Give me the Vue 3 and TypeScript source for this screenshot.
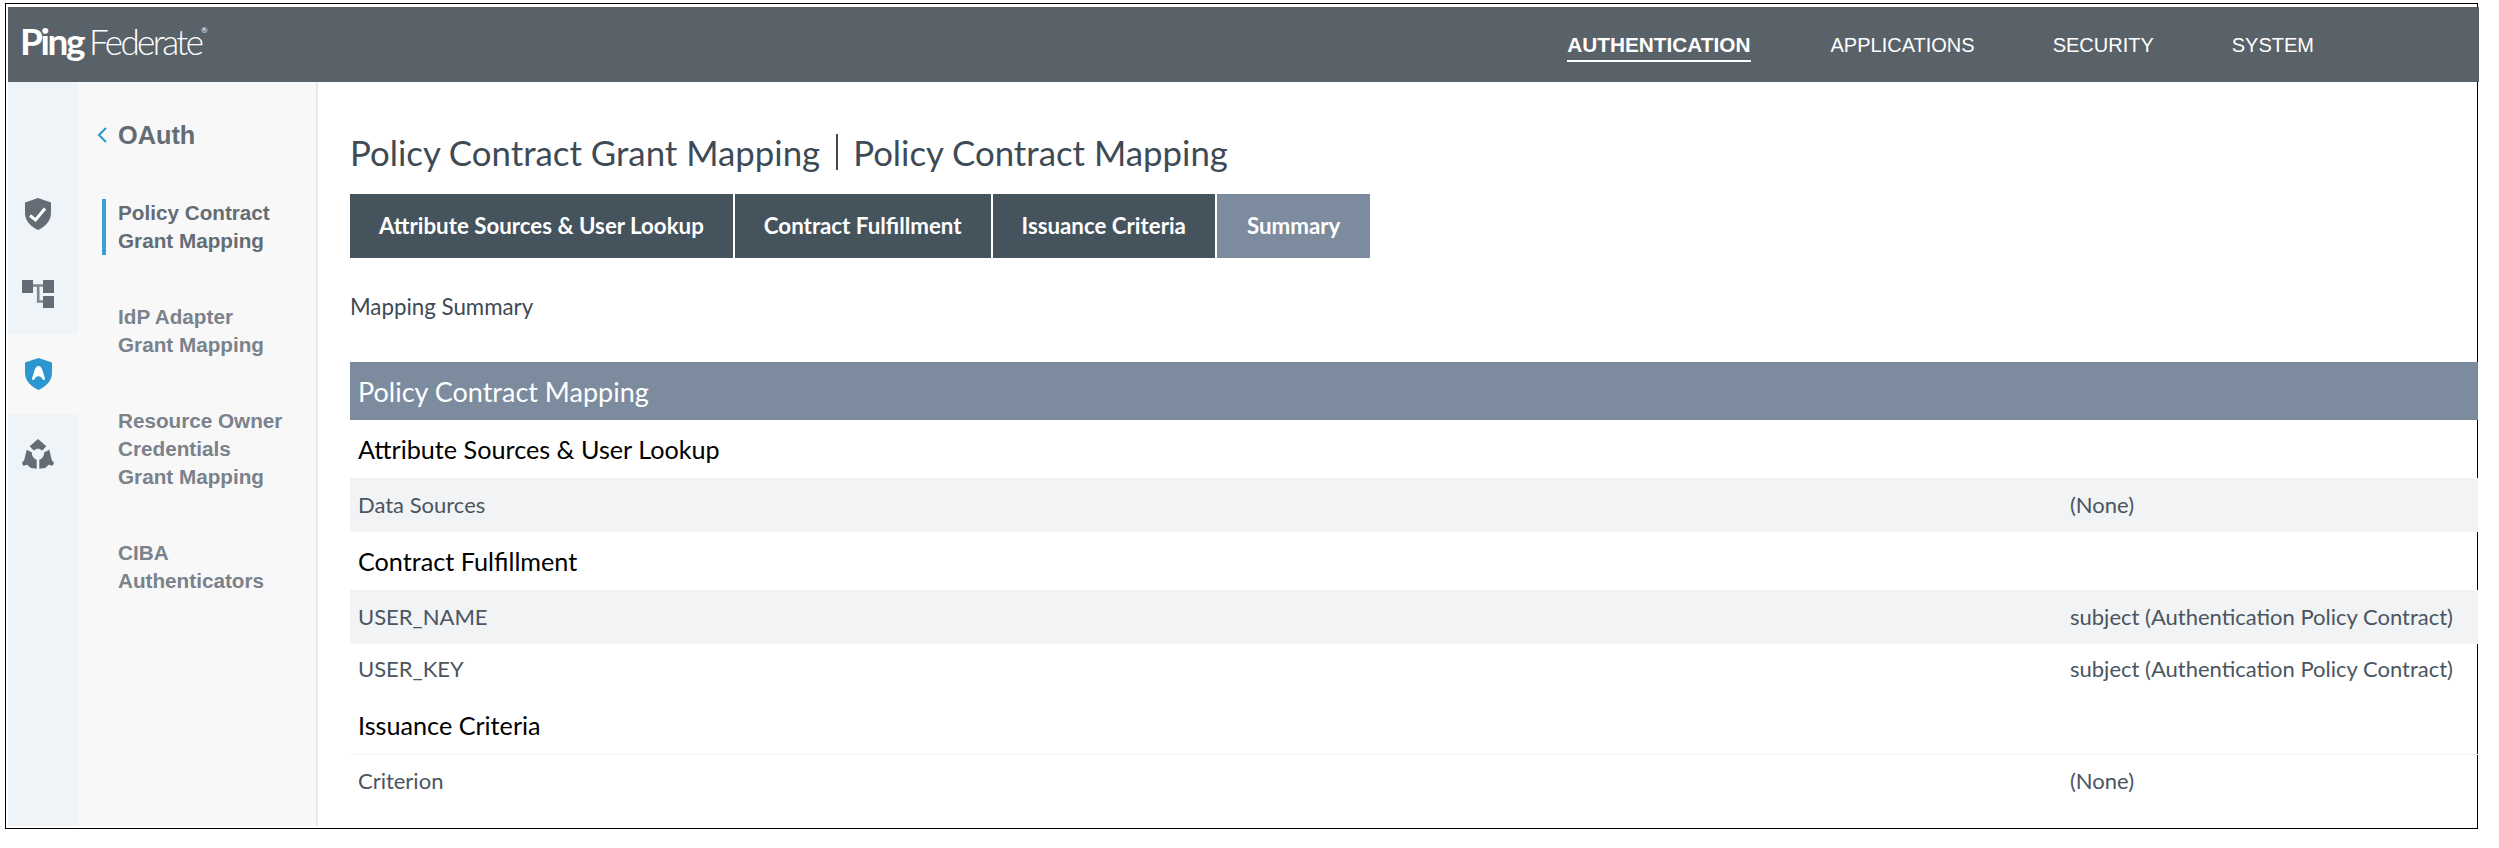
<template>
  <div class="frame">
    <header class="topbar">
      <div class="logo">
        <span class="logo-ping">Ping</span><span class="logo-fed">Federate</span><span class="logo-reg">®</span>
      </div>
      <nav class="topnav">
        <a v-for="item in topNav" :key="item" class="topnav-item" :class="{ active: item === 'AUTHENTICATION' }">{{ item }}</a>
      </nav>
    </header>

    <div class="body">
      <aside class="rail">
        <div class="rail-item">
          <svg width="26" height="32" viewBox="0 0 26 32">
            <path d="M13 0L26 4.5V15C26 23.5 19.5 29 13 32C6.5 29 0 23.5 0 15V4.5Z" fill="#646c75" />
            <path d="M5 17.5L10.5 22L20 10.5" fill="none" stroke="#fff" stroke-width="3" />
          </svg>
        </div>
        <div class="rail-item">
          <svg width="32" height="28" viewBox="0 0 32 28">
            <path d="M0 0H11V13H0ZM21 0H32V13H21ZM21 16H32V28H21Z" fill="#646c75" />
            <path d="M11 5.5H21M16.2 5.5V21.5H21" fill="none" stroke="#7f868e" stroke-width="2.6" />
          </svg>
        </div>
        <div class="rail-item active">
          <svg width="27" height="32" viewBox="0 0 27 32">
            <path d="M13.5 0L27 4.5V15C27 23.5 20 29 13.5 32C7 29 0 23.5 0 15V4.5Z" fill="#2b96cf" />
            <path d="M13.5 8C15.5 8 16.5 9.5 17.5 12.5L20 20.5C20.3 22 18.2 22.5 17.5 21.2C16.5 19.2 15.5 18.2 13.5 18.2C11.5 18.2 10.5 19.2 9.5 21.2C8.8 22.5 6.7 22 7 20.5L9.5 12.5C10.5 9.5 11.5 8 13.5 8Z" fill="#fff" />
          </svg>
        </div>
        <div class="rail-item">
          <svg width="32" height="30" viewBox="0 0 32 30">
            <path d="M16 0L24.3 7.3L20 11.7C17.5 9.2 14.5 9.2 12 11.7L7.7 7.3Z" fill="#646c75" />
            <path d="M4.7 10.7L10 13.5C9.5 16.5 11.5 19.5 14.7 20.7V29.7L9 29C7.5 28 6.5 27 5.7 25.7L1.3 26.7L0 24L2.3 20.7Z" fill="#646c75" />
            <path d="M27.3 10.7L22 13.5C22.5 16.5 20.5 19.5 17.3 20.7V29.7L23 29C24.5 28 25.5 27 26.3 25.7L30.7 26.7L32 24L29.7 20.7Z" fill="#646c75" />
          </svg>
        </div>
      </aside>

      <aside class="subnav">
        <div class="subnav-title">
          <svg width="10" height="16" viewBox="0 0 10 16">
            <path d="M9 1L2 8L9 15" fill="none" stroke="#2b96cf" stroke-width="2" />
          </svg>
          <span>OAuth</span>
        </div>
        <div class="subnav-list">
          <a v-for="(lines, i) in subNav" :key="i" class="subnav-item" :class="{ active: i === 0 }">
            <span v-for="line in lines" :key="line">{{ line }}</span>
          </a>
        </div>
      </aside>

      <main class="content">
        <h1 class="title">
          <span>Policy Contract Grant Mapping</span>
          <i class="title-sep"></i>
          <span>Policy Contract Mapping</span>
        </h1>

        <div class="tabs">
          <div v-for="tab in tabs" :key="tab" class="tab" :class="{ active: tab === 'Summary' }">{{ tab }}</div>
        </div>

        <p class="desc">Mapping Summary</p>

        <section class="summary">
          <div class="summary-head">Policy Contract Mapping</div>
          <template v-for="section in sections" :key="section.title">
            <div class="section-title" :class="section.cls">{{ section.title }}</div>
            <div v-for="row in section.rows" :key="row.label" class="row" :class="row.cls">
              <span>{{ row.label }}</span>
              <span>{{ row.value }}</span>
            </div>
          </template>
        </section>
      </main>
    </div>
  </div>
</template>

<script setup lang="ts">
interface SummaryRow {
  label: string
  value: string
  cls?: string
}

interface SummarySection {
  title: string
  cls?: string
  rows: SummaryRow[]
}

const topNav: string[] = ['AUTHENTICATION', 'APPLICATIONS', 'SECURITY', 'SYSTEM']

const subNav: string[][] = [
  ['Policy Contract', 'Grant Mapping'],
  ['IdP Adapter', 'Grant Mapping'],
  ['Resource Owner', 'Credentials', 'Grant Mapping'],
  ['CIBA', 'Authenticators']
]

const tabs: string[] = ['Attribute Sources & User Lookup', 'Contract Fulfillment', 'Issuance Criteria', 'Summary']

const contract = 'subject (Authentication Policy Contract)'

const sections: SummarySection[] = [
  {
    title: 'Attribute Sources & User Lookup',
    rows: [{ label: 'Data Sources', value: '(None)', cls: 'shaded' }]
  },
  {
    title: 'Contract Fulfillment',
    rows: [
      { label: 'USER_NAME', value: contract, cls: 'shaded' },
      { label: 'USER_KEY', value: contract, cls: 'short' }
    ]
  },
  {
    title: 'Issuance Criteria',
    cls: 'ruled',
    rows: [{ label: 'Criterion', value: '(None)' }]
  }
]
</script>

<style>
html,
body {
  margin: 0;
  background: #fff;
}
</style>

<style scoped>
.frame {
  box-sizing: border-box;
  width: 2473px;
  height: 826px;
  margin: 3px 0 0 5px;
  padding: 3px 0 2px 2px;
  border: 1px solid #000;
  display: flex;
  flex-direction: column;
  font-family: Lato, "Liberation Sans", sans-serif;
}

.topbar {
  width: 2471px;
  height: 75px;
  flex-shrink: 0;
  background: #5a6269;
  display: flex;
  align-items: center;
  justify-content: space-between;
  position: relative;
  z-index: 1;
}

.logo {
  position: relative;
  margin: 0 0 7px 12px;
  color: #fff;
  font-size: 37px;
  line-height: 40px;
  white-space: nowrap;
}

.logo-ping {
  font-weight: 700;
  letter-spacing: -2.4px;
  margin-right: 6px;
}

.logo-fed {
  font-size: 35px;
  font-weight: 300;
  letter-spacing: -2.6px;
}

.logo-reg {
  position: absolute;
  left: 181px;
  top: 5px;
  font-size: 8px;
  line-height: 8px;
}

.topnav {
  display: flex;
  gap: 78px;
  margin-right: 165px;
  font-family: "Liberation Sans", sans-serif;
  font-size: 20px;
  color: #fff;
}

.topnav-item {
  line-height: 24px;
  padding: 6px 0 3px;
  border-bottom: 2px solid transparent;
}

.topnav-item.active {
  margin-right: 2px;
  font-weight: 700;
  font-size: 20.8px;
  border-bottom-color: #fff;
}

.body {
  flex: 1;
  display: flex;
  min-height: 0;
}

.rail {
  width: 70px;
  flex-shrink: 0;
  box-sizing: border-box;
  padding-top: 92px;
  background: #eff4f8;
}

.rail-item {
  height: 80px;
  padding-right: 10px;
  display: flex;
  align-items: center;
  justify-content: center;
}

.rail-item.active {
  background: #f8f8f8;
}

.subnav {
  width: 240px;
  flex-shrink: 0;
  box-sizing: border-box;
  padding-top: 37px;
  background: #f8f8f8;
  border-right: 2px solid #e8ecf1;
  font-family: "Liberation Sans", sans-serif;
  font-weight: 700;
}

.subnav-title {
  display: flex;
  align-items: center;
  gap: 11px;
  margin-left: 19px;
  font-size: 25.3px;
  line-height: 32px;
  color: #646c75;
}

.subnav-list {
  display: flex;
  flex-direction: column;
  gap: 48px;
  margin-top: 48px;
}

.subnav-item {
  display: flex;
  flex-direction: column;
  margin-left: 24px;
  padding-left: 12px;
  border-left: 4px solid transparent;
  font-size: 20.7px;
  line-height: 28px;
  color: #7a828b;
}

.subnav-item.active {
  border-left-color: #3ba0d6;
  color: #646c75;
}

.content {
  flex: 1;
  min-width: 0;
  padding: 50px 0 0 32px;
  margin-right: -1px;
}

.title {
  display: flex;
  align-items: center;
  gap: 13px;
  margin: 0;
  height: 40px;
  font-size: 34.8px;
  font-weight: 400;
  color: #3e4a55;
}

.title-sep {
  width: 2px;
  height: 36px;
  margin: 0 2px 0 3px;
  background: #3e4a55;
}

.tabs {
  display: flex;
  gap: 2px;
  margin-top: 22px;
}

.tab {
  box-sizing: border-box;
  height: 64px;
  padding: 0 29px 2px;
  display: flex;
  align-items: center;
  font-size: 22.3px;
  font-weight: 700;
  color: #fff;
  background: #45535d;
}

.tab.active {
  padding: 0 30px 2px;
  background: #7c8c9e;
}

.desc {
  margin: 34px 0 0;
  font-size: 22.3px;
  line-height: 30px;
  color: #3e4a55;
}

.summary {
  margin-top: 40px;
}

.summary-head {
  height: 58px;
  padding-left: 8px;
  display: flex;
  align-items: center;
  font-size: 27px;
  color: #fff;
  background: #7c8c9e;
}

.section-title {
  height: 58px;
  padding-left: 8px;
  display: flex;
  align-items: center;
  font-size: 25.2px;
  color: #000;
}

.section-title.ruled {
  height: 61px;
  padding-top: 2px;
  border-bottom: 1px solid #f1f3f5;
  box-sizing: border-box;
}

.section-title.ruled + .row {
  padding-bottom: 4px;
}

.row {
  box-sizing: border-box;
  height: 54px;
  padding-bottom: 2px;
  display: grid;
  grid-template-columns: 1720px 1fr;
  align-items: center;
  font-size: 22px;
  color: #4a5560;
}

.row span:first-child {
  padding-left: 8px;
}

.row.shaded {
  background: #f1f3f5;
}

.row.short {
  height: 50px;
}
</style>
